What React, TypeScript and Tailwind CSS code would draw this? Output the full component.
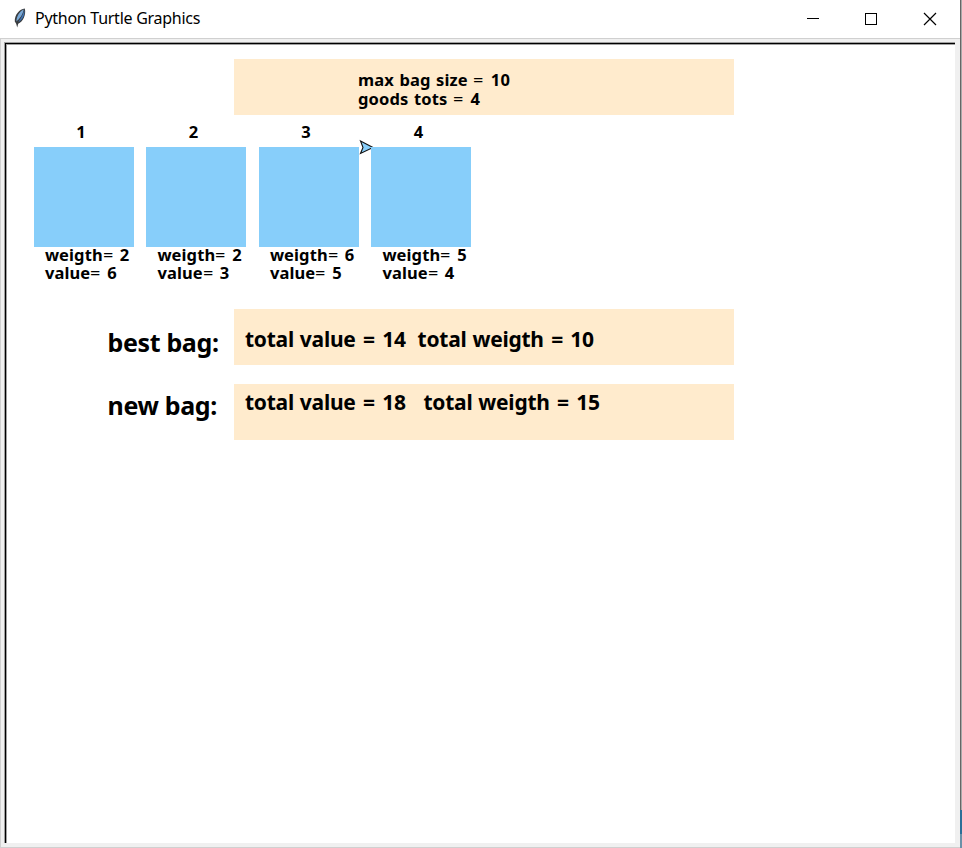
import type { ReactNode } from "react";

const goods = [
  { id: 1, weight: 2, value: 6 },
  { id: 2, weight: 2, value: 3 },
  { id: 3, weight: 6, value: 5 },
  { id: 4, weight: 5, value: 4 },
];

function Eq() {
  return <span className="mr-[1px] inline-block origin-left scale-x-110 pr-[1.5px] font-normal">=</span>;
}

function TitleBar() {
  return (
    <header className="flex h-[38px] w-[960px] shrink-0 items-center bg-white pl-[13px]">
      <svg width="14" height="20" viewBox="0 0 14 20" className="mt-[-2px]">
        <path d="M11.8 0.6C6.6 1 1.4 7 1.8 13.4L3.2 15.8L4.2 19.4L5.2 15.8C10 13.8 13.4 7 11.8 0.6Z" fill="#3a3d40" />
        <path d="M10.8 1.6C6.6 3.2 3.4 8.6 3.4 13.4C6.6 11 9.8 6.6 10.8 1.6Z" fill="#79a9d8" />
        <path d="M11.3 2.2C12 7 9.6 11.8 5.2 14.2C7.8 10.6 9.6 7 11.3 2.2Z" fill="#3d74b8" />
      </svg>
      <h1 className="mb-[2px] ml-2 w-[260px] whitespace-pre text-[16px] leading-[22px] tracking-[-0.27px]">Python Turtle Graphics</h1>
      <div className="ml-auto flex items-center">
        <svg width="153" height="38" viewBox="0 0 153 38" fill="none" stroke="#000" shapeRendering="crispEdges">
          <path d="M0 18.5H12" />
          <rect x="58.5" y="13.5" width="11" height="11" />
          <path d="M117 13L129 25M129 13L117 25" shapeRendering="auto" strokeWidth="1.2" />
        </svg>
      </div>
    </header>
  );
}

function Banner({ children, className }: { children: ReactNode; className: string }) {
  return <div className={`h-[56px] w-[500px] shrink-0 whitespace-pre bg-[#ffebcd] ${className}`}>{children}</div>;
}

function Total({ value, gap, weight }: { value: number; gap: string; weight: number }) {
  return (
    <p className="text-[21px] leading-[30px] tracking-[-0.25px] [word-spacing:0.7px]">
      total value <span className="mx-[1.5px]">=</span> {value}{gap}total weigth <span className="mx-[1.5px]">=</span> {weight}
    </p>
  );
}

function Turtle() {
  return (
    <svg width="16" height="16" viewBox="0 0 16 16" className="absolute left-[325px] top-[-8px]">
      <path d="M1.5 2L14 8.5L1.5 14.5L4 8.5Z" fill="#87cefa" stroke="#111" strokeWidth="1.1" />
    </svg>
  );
}

export default function App() {
  return (
    <div className="flex h-[848px] w-[962px] overflow-hidden bg-[#f0f0f0] font-['Noto_Sans','Open_Sans',sans-serif] text-black">
      <div className="flex w-[960px] shrink-0 flex-col">
        <TitleBar />
        <div className="flex h-[810px] flex-col border-b border-l border-t border-[#d0d0d0] pl-[3px] pt-[3px]">
          <div className="h-[801px] w-[951px] border-l border-t border-[#a0a0a0]">
            <div className="h-[800px] w-[950px] border-l border-t border-black">
              <main className="h-[799px] w-[949px] border-l border-t border-[#a0a0a0] bg-white font-bold">
                <Banner className="ml-[227px] mt-[14px] pl-[124px] pt-[11px] text-[16.5px] leading-[19px] tracking-[0.15px] [word-spacing:1px]">
                  <div>max bag size <Eq /> 10</div>
                  <div>goods tots <Eq /> 4</div>
                </Banner>
                <section className="ml-[26.9px] mt-[6px] flex gap-[12.5px] text-[16.5px]">
                  {goods.map((item) => (
                    <article key={item.id} className="w-[100px]">
                      <div className="h-[26px] pr-[6px] text-center leading-[22px]">{item.id}</div>
                      <div className="relative h-[100px] bg-[#87cefa]">{item.id === 1 && <Turtle />}</div>
                      <div className="mt-[-1px] h-[38px] whitespace-pre pl-[11px] leading-[18px] tracking-[0.1px] [word-spacing:0.5px]">
                        <div>weigth<Eq /> {item.weight}</div>
                        <div>value<Eq /> {item.value}</div>
                      </div>
                    </article>
                  ))}
                </section>
                <div className="mt-[25px] flex">
                  <h2 className="w-[227px] whitespace-pre pl-[100.5px] pt-[16px] text-[25px] leading-[34px] tracking-[-0.35px]">best bag:</h2>
                  <Banner className="pl-[11px] pt-[15px]">
                    <Total value={14} gap="  " weight={10} />
                  </Banner>
                </div>
                <div className="mt-[19px] flex">
                  <h2 className="w-[227px] whitespace-pre pl-[100.5px] pt-[4px] text-[25px] leading-[34px] tracking-[-0.35px]">new bag:</h2>
                  <Banner className="pl-[11px] pt-[3px]">
                    <Total value={18} gap="   " weight={15} />
                  </Banner>
                </div>
              </main>
            </div>
          </div>
        </div>
      </div>
      <div className="flex w-[2px] flex-col bg-[#a8a8a8]">
        <div className="h-[810px] border-l border-[#666]" />
        <div className="h-[24px] bg-[#2b6f98]" />
        <div className="h-[14px] bg-[#6a91a8]" />
      </div>
    </div>
  );
}
